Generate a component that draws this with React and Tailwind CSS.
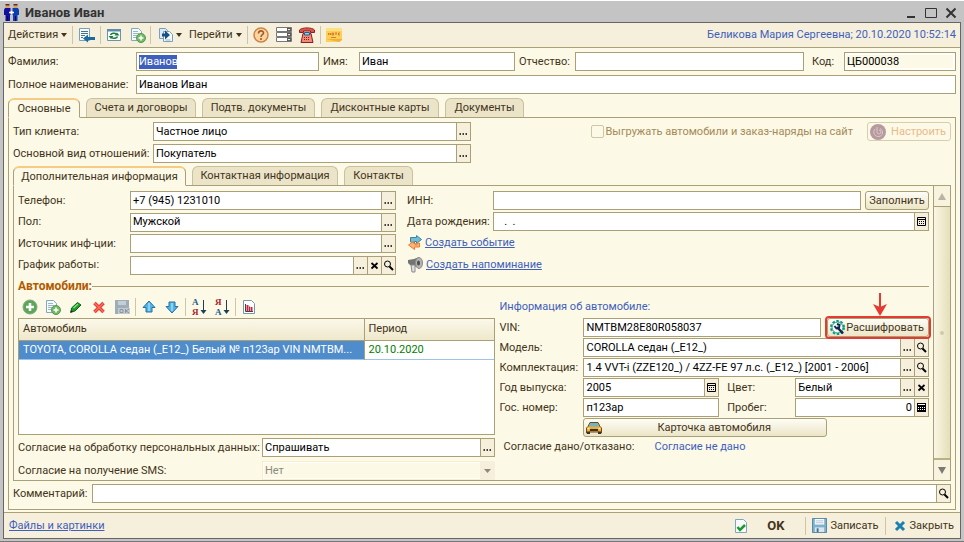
import clsx from 'clsx'

const mainTabs = [
    { title: 'Основные', width: 'w-[72px]' },
    { title: 'Счета и договоры', width: 'w-[110px]' },
    { title: 'Подтв. документы', width: 'w-[113px]' },
    { title: 'Дисконтные карты', width: 'w-[118px]' },
    { title: 'Документы', width: 'w-[79px]' },
]

const infoTabs = [
    { title: 'Дополнительная информация', width: 'w-[173px]' },
    { title: 'Контактная информация', width: 'w-[146px]' },
    { title: 'Контакты', width: 'w-[69px]' },
]

const cars = [
    { name: 'TOYOTA, COROLLA седан (_E12_) Белый № п123ар VIN NMTBM...', period: '20.10.2020' },
]

export default function App() {

    return (

        <div className="flex min-h-screen w-full flex-col border-t border-b border-t-white border-b-[#777] bg-[#c4c4c4] px-[3px] pb-0.5 font-['Roboto','Liberation_Sans',sans-serif] text-[11px] leading-4 whitespace-nowrap text-[#43341a]">

            <TitleBar />

            <div className="flex flex-1 flex-col border border-[#666] bg-[#fcf9e6]">

                <Toolbar />

                <main className="flex flex-1 flex-col px-1 pt-1">

                    {/* NAME FIELDS */}

                    <div className="grid grid-cols-[128px_183fr_40px_156fr_60px_229fr_40px_112fr] items-center">
                        <label htmlFor="surname">Фамилия:</label>
                        <div className="flex h-[19px] items-center border border-[#a9a077] bg-white pl-0.5">
                            <input
                                id="surname"
                                defaultValue="Иванов"
                                className="h-3.5 w-[38px] bg-[#3f5fbd] text-white outline-none"
                            />
                        </div>
                        <label htmlFor="name" className="pl-1">Имя:</label>
                        <Field id="name" value="Иван" />
                        <label htmlFor="patronymic" className="pl-1">Отчество:</label>
                        <Field id="patronymic" />
                        <label htmlFor="code" className="pl-2">Код:</label>
                        <Field id="code" value="ЦБ000038" muted />
                    </div>

                    <div className="mt-1 flex items-center">
                        <label htmlFor="fullname" className="w-32 shrink-0">Полное наименование:</label>
                        <Field id="fullname" value="Иванов Иван" />
                    </div>

                    {/* MAIN TABS */}

                    <Tabs items={mainTabs} className="mt-1" />

                    <section className="border border-[#a9a077] px-1 pt-1 pb-1.5">

                        <div className="flex items-start justify-between">

                            <div className="grid w-1/2 max-w-[458px] grid-cols-[140px_1fr] items-center gap-y-[3px]">
                                <label htmlFor="type">Тип клиента:</label>
                                <Field id="type" value="Частное лицо" actions={['dots']} />
                                <label htmlFor="relation">Основной вид отношений:</label>
                                <Field id="relation" value="Покупатель" actions={['dots']} />
                            </div>

                            <div className="flex items-center">
                                <label className="flex items-center gap-0.5 text-[#a58a58]">
                                    <input
                                        type="checkbox"
                                        disabled
                                        className="size-[13px] appearance-none rounded-xs border border-[#cfc7a4]"
                                    />
                                    Выгружать автомобили и заказ-наряды на сайт
                                </label>
                                <button
                                    disabled
                                    className="ml-3.5 flex h-[19px] w-[84px] items-center justify-between rounded-[3px] border border-[#d6cfae] pr-1 pl-0.5 text-[#eab98c]"
                                >
                                    <SpiralIcon />
                                    Настроить
                                </button>
                            </div>

                        </div>

                        {/* INFO TABS */}

                        <Tabs items={infoTabs} className="mt-[3px]" />

                        <div className="flex border border-[#a9a077]">

                            <div className="min-w-0 flex-1 pt-[5px] pr-1 pl-1">

                                <PersonalInfo />

                                <div className="mt-[3px] flex items-center text-xs leading-4 font-bold text-[#b25a00]">
                                    <h2>Автомобили:</h2>
                                    <hr className="flex-1 border-[#a9a077]" />
                                </div>

                                <div className="mt-[3px] grid grid-cols-[478fr_430fr] gap-x-1">
                                    <CarList />
                                    <CarInfo />
                                </div>

                            </div>

                            <ScrollBar />

                        </div>

                        <div className="mt-[3px] flex items-center">
                            <label htmlFor="comment" className="w-[79px] shrink-0">Комментарий:</label>
                            <Field id="comment" actions={['search']} />
                        </div>

                    </section>

                </main>

                <Footer />

            </div>

        </div>

    )
}


function TitleBar() {

    return (

        <header className="flex h-[21px] items-center pt-0.5 pr-1 pl-px text-[#333]">
            <PeopleIcon />
            <h1 className="ml-1.5 flex-1 text-[13px] font-bold">Иванов Иван</h1>
            <button aria-label="Свернуть" className="mr-2">
                <svg width="12" height="12" viewBox="0 0 12 12"><path d="M2 10h8" stroke="#333" strokeWidth="2" /></svg>
            </button>
            <button aria-label="Развернуть" className="mr-2">
                <svg width="12" height="12" viewBox="0 0 12 12"><path d="M.5 1.5h11v9H.5z" fill="none" stroke="#333" /></svg>
            </button>
            <button aria-label="Закрыть окно">
                <svg width="12" height="12" viewBox="0 0 12 12"><path d="M1.500 1.500l9 9m0-9l-9 9" stroke="#333" strokeWidth="2" /></svg>
            </button>
        </header>

    )
}


function Toolbar() {

    return (

        <nav className="flex h-[25px] shrink-0 items-center border-b border-[#a9a077] bg-[#f5efdb] px-1">
            <button className="flex w-[59px] items-center justify-between">Действия <Caret /></button>
            <Divider className="mx-[5px]" />
            <button aria-label="Записать и закрыть"><ListArrowIcon /></button>
            <Divider className="mx-[5px]" />
            <button aria-label="Перечитать"><RefreshIcon /></button>
            <button aria-label="Скопировать" className="ml-2"><DocPlusIcon /></button>
            <Divider className="mr-[7px] ml-1" />
            <button aria-label="Ввести на основании" className="flex items-center gap-0.5"><DocsIcon /><Caret /></button>
            <button className="ml-[7px] flex w-[53px] items-center justify-between">Перейти <Caret /></button>
            <Divider className="mx-[5px]" />
            <button aria-label="Справка"><HelpIcon /></button>
            <button aria-label="Настройки" className="ml-[7px]"><ServerIcon /></button>
            <button aria-label="Позвонить" className="ml-[7px]"><PhoneIcon /></button>
            <Divider className="mx-[5px]" />
            <button aria-label="Заметка"><NoteIcon /></button>
            <span className="ml-auto text-[#3f5fbd]">Беликова Мария Сергеевна; 20.10.2020 10:52:14</span>
        </nav>

    )
}


function PersonalInfo() {

    return (

        <div className="grid grid-cols-[378fr_522fr] gap-x-[11px]">

            <div className="grid grid-cols-[112px_1fr] items-center gap-y-0.5">
                <label htmlFor="phone">Телефон:</label>
                <Field id="phone" value="+7 (945) 1231010" actions={['dots']} />
                <label htmlFor="sex">Пол:</label>
                <Field id="sex" value="Мужской" actions={['dots']} />
                <label htmlFor="source">Источник инф-ции:</label>
                <Field id="source" actions={['dots']} />
                <label htmlFor="schedule">График работы:</label>
                <Field id="schedule" actions={['dots', 'clear', 'search']} />
            </div>

            <div className="flex flex-col gap-0.5">
                <div className="flex items-center">
                    <label htmlFor="inn" className="w-[86px] shrink-0">ИНН:</label>
                    <Field id="inn" />
                    <Button className="ml-1 w-16 shrink-0 justify-center">Заполнить</Button>
                </div>
                <div className="flex items-center">
                    <label htmlFor="birthday" className="w-[86px] shrink-0">Дата рождения:</label>
                    <Field id="birthday" value="   .  ." actions={['calendar']} />
                </div>
                <div className="flex h-5 items-center gap-0.5">
                    <EventIcon />
                    <a href="#event" className="text-[#3f5fbd] underline">Создать событие</a>
                </div>
                <div className="flex h-5 items-center gap-0.5">
                    <HornIcon />
                    <a href="#reminder" className="text-[#3f5fbd] underline">Создать напоминание</a>
                </div>
            </div>

        </div>

    )
}


function CarList() {

    return (

        <div className="min-w-0">

            <div className="flex h-5 items-center pl-1">
                <button aria-label="Добавить"><PlusIcon /></button>
                <button aria-label="Добавить копированием" className="ml-[7px]"><DocPlusIcon /></button>
                <button aria-label="Изменить" className="ml-[7px]"><PencilIcon /></button>
                <button aria-label="Удалить" className="ml-[7px]"><DeleteIcon /></button>
                <button aria-label="Сохранить" className="ml-[7px]" disabled><SaveOkIcon /></button>
                <Divider className="mx-[5px]" />
                <button aria-label="Вверх"><ArrowIcon /></button>
                <button aria-label="Вниз" className="ml-[7px]"><ArrowIcon className="rotate-180" /></button>
                <Divider className="mx-[5px]" />
                <button aria-label="По возрастанию"><SortIcon top="А" bottom="Я" /></button>
                <button aria-label="По убыванию" className="ml-[7px]"><SortIcon top="Я" bottom="А" flip /></button>
                <Divider className="mx-[5px]" />
                <button aria-label="Отчет"><ChartIcon /></button>
            </div>

            <div className="mt-px h-[117px] border border-[#a9a077] bg-white">
                <table className="w-full table-fixed text-left">
                    <thead>
                        <tr className="h-[21px] bg-linear-to-b from-[#fbf8ea] to-[#efe8cb]">
                            <th className="w-[345px] border-r border-b border-[#a9a077] px-1 font-normal">Автомобиль</th>
                            <th className="border-b border-[#a9a077] px-1 font-normal">Период</th>
                        </tr>
                    </thead>
                    <tbody>
                        {cars.map(car => (
                            <tr key={car.name} className="h-[19px] border-b border-[#9fc3e6]">
                                <td className="truncate border-r border-[#a9a077] bg-[#4f8ccb] px-1 text-white">{car.name}</td>
                                <td className="px-1 text-[#008000]">{car.period}</td>
                            </tr>
                        ))}
                    </tbody>
                </table>
            </div>

            <div className="mt-[3px] flex items-center">
                <label htmlFor="consent" className="w-[244px] shrink-0">Согласие на обработку персональных данных:</label>
                <Field id="consent" value="Спрашивать" actions={['dots']} />
            </div>

            <div className="mt-1 flex items-center">
                <label htmlFor="sms" className="w-[244px] shrink-0">Согласие на получение SMS:</label>
                <div className="relative flex-1">
                    <select
                        id="sms"
                        disabled
                        className="block h-[19px] w-full appearance-none border border-[#f9eecb] bg-[#fcf9e6] px-0.5 text-[#8a8a80] opacity-100 inset-ring-1 inset-ring-white"
                    >
                        <option>Нет</option>
                    </select>
                    <span className="pointer-events-none absolute inset-y-0 right-0 flex w-[15px] items-center justify-center bg-[#f5efdb]">
                        <svg width="7" height="4" viewBox="0 0 7 4"><path d="M0 0h7L3.500 4z" fill="#8a8a80" /></svg>
                    </span>
                </div>
            </div>

        </div>

    )
}


function CarInfo() {

    return (

        <div>

            <h3 className="flex h-5 items-center text-[#3f5fbd]">Информация об автомобиле:</h3>

            <div className="mt-px grid grid-cols-[84px_1fr] items-center gap-y-px">

                <label htmlFor="vin">VIN:</label>
                <div className="flex items-center">
                    <Field id="vin" value="NMTBM28E80R058037" />
                    <div className="relative ml-1.5 w-[102px] shrink-0">
                        <Button className="w-full justify-between pr-1 pl-0.5">
                            <GearIcon />
                            Расшифровать
                        </Button>
                        <span className="pointer-events-none absolute -inset-x-0.5 -inset-y-0.5 rounded-sm border-2 border-[#e53a30]" />
                        <svg className="pointer-events-none absolute right-[42px] bottom-full mb-0.5" width="14" height="23" viewBox="0 0 14 23">
                            <path d="M7 0v16" stroke="#e53a30" strokeWidth="2" />
                            <path d="M0 11l7 3 7-3-7 12z" fill="#e53a30" />
                        </svg>
                    </div>
                </div>

                <label htmlFor="model">Модель:</label>
                <Field id="model" value="COROLLA седан (_E12_)" actions={['dots', 'search']} />

                <label htmlFor="kit">Комплектация:</label>
                <Field id="kit" value="1.4 VVT-i (ZZE120_) / 4ZZ-FE 97 л.с. (_E12_) [2001 - 2006]" actions={['dots', 'search']} />

                <label htmlFor="year">Год выпуска:</label>
                <div className="grid grid-cols-[136fr_76px_134fr] items-center">
                    <Field id="year" value="2005" actions={['calendar']} />
                    <label htmlFor="color" className="pl-2">Цвет:</label>
                    <Field id="color" value="Белый" actions={['dots', 'clear']} />
                </div>

                <label htmlFor="plate">Гос. номер:</label>
                <div className="grid grid-cols-[136fr_76px_134fr] items-center">
                    <Field id="plate" value="п123ар" />
                    <label htmlFor="mileage" className="pl-2">Пробег:</label>
                    <Field id="mileage" value="0" actions={['calc']} align="right" />
                </div>

                <Button className="col-start-2 mr-[102px] pl-0.5">
                    <CarIcon />
                    <span className="flex-1 text-center">Карточка автомобиля</span>
                </Button>

            </div>

            <p className="flex h-5 items-center pl-1">
                <span className="w-[151px]">Согласие дано/отказано:</span>
                <span className="text-[#3f5fbd]">Согласие не дано</span>
            </p>

        </div>

    )
}


function ScrollBar() {

    return (

        <div className="flex w-[17px] shrink-0 flex-col border-l border-[#a9a077] bg-linear-to-r from-[#faf6e4] to-[#e6dfba]">
            <button aria-label="Прокрутить вверх" className="flex h-[21px] items-center justify-center border-b border-[#a9a077] bg-[#f8f3df]">
                <svg width="8" height="7" viewBox="0 0 8 7"><path d="M0 7h8L4 0z" fill="#b8b4a2" /></svg>
            </button>
            <div className="flex flex-1 items-center justify-center">
                <span className="size-1 rounded-full bg-[#cfc9ae]" />
            </div>
            <button aria-label="Прокрутить вниз" className="flex h-[22px] items-center justify-center border-t-2 border-[#b9b084] bg-[#f8f3df]">
                <svg width="8" height="7" viewBox="0 0 8 7"><path d="M0 0h8L4 7z" fill="#7d7a70" /></svg>
            </button>
        </div>

    )
}


function Footer() {

    return (

        <footer className="mt-0.5 flex h-[26px] shrink-0 items-center border-t border-[#a9a077] bg-[#f5efdb] pr-1.5 pl-[5px]">
            <a href="#files" className="text-[#3f5fbd] underline">Файлы и картинки</a>
            <button className="ml-auto flex items-center gap-[18px] text-[13px] font-bold"><CheckDocIcon /> OK</button>
            <Divider className="mr-1.5 ml-[21px]" />
            <button className="flex items-center gap-[3px]"><DiskIcon /> Записать</button>
            <Divider className="mr-[7px] ml-1.5" />
            <button className="flex items-center gap-[3px]"><CloseIcon /> Закрыть</button>
        </footer>

    )
}


function Tabs({ items, className }) {

    return (

        <div className={clsx('flex gap-1.5', className)} role="tablist">
            {items.map((item, index) => (
                <button
                    key={item.title}
                    role="tab"
                    aria-selected={index === 0}
                    className={clsx(
                        'rounded-t-md border',
                        item.width,
                        index === 0
                            ? 'relative -mb-px h-5 border-t-2 border-[#a9a077] border-t-[#f6cb86] border-b-[#fcf9e6] bg-[#fcf9e6]'
                            : 'h-[19px] border-b-0 border-[#c9c19b] bg-[#ebe4c8]'
                    )}
                >
                    {item.title}
                </button>
            ))}
        </div>

    )
}


function Field({ id, value = '', actions = [], muted, align }) {

    return (

        <div className="flex h-[19px] min-w-0 flex-1 border border-[#a9a077] bg-white text-black">
            <input
                id={id}
                defaultValue={value}
                className={clsx(
                    'min-w-0 flex-1 outline-none',
                    muted ? 'm-0.5 bg-[#fcf9e6]' : 'px-0.5',
                    align === 'right' && 'text-right'
                )}
            />
            {actions.map(action => (
                <button
                    key={action}
                    aria-label={action}
                    className="flex w-3.5 shrink-0 items-center justify-center border-l border-[#a9a077] bg-[#f5efdb]"
                >
                    <ActionIcon name={action} />
                </button>
            ))}
        </div>

    )
}


function Button({ className, children }) {

    return (

        <button
            className={clsx(
                'flex h-[19px] items-center rounded-[3px] border border-[#a9a077] bg-linear-to-b from-[#fefdf6] to-[#ece5c6]',
                className
            )}
        >
            {children}
        </button>

    )
}


function Divider({ className }) {

    return <span className={clsx('h-[18px] w-px shrink-0 bg-[#cdc6a6]', className)} />
}


function Caret() {

    return <svg className="shrink-0" width="6" height="4" viewBox="0 0 6 4"><path d="M0 0h6L3 4z" fill="#43341a" /></svg>
}


/* ICONS */

function ActionIcon({ name }) {

    return (

        <svg className="shrink-0" width="11" height="11" viewBox="0 0 11 11" fill="none" stroke="#000">
            {name === 'dots' && <path d="M1.500 8h1.500M4.500 8H6M7.500 8H9" strokeWidth="1.500" />}
            {name === 'clear' && <path d="M2.500 3l6 5.500m0-5.500l-6 5.500" strokeWidth="1.700" />}
            {name === 'search' && (
                <>
                    <circle cx="4.500" cy="4" r="3" />
                    <path d="M6.500 6.500l3.500 3.500" strokeWidth="2" />
                </>
            )}
            {name === 'calendar' && (
                <>
                    <path d="M1.500 1.500h8v8h-8zM1.500 3.500h8" />
                    <path d="M3 5.500h6M3 7.500h6" strokeDasharray="1 1" />
                </>
            )}
            {name === 'calc' && (
                <>
                    <path d="M1 1h9v9H1z" fill="#000" stroke="none" />
                    <path d="M2 2.500h7" stroke="#fff" />
                    <path d="M2 5.500h7M2 7.500h7" stroke="#fff" strokeDasharray="1 1" />
                </>
            )}
        </svg>

    )
}

function PeopleIcon() {

    return (

        <svg width="15" height="17" viewBox="0 0 15 17">
            <path d="M1.500 1h4v3h-4zM9.500 1h4v3h-4z" fill="#d9a06a" />
            <path d="M1.500 0h4v1.500h-4zM9.500 0h4v1.500h-4z" fill="#5a2f1c" />
            <path d="M1 4h5.500v7H6v6H1.500v-6H0V6z" fill="#10109c" />
            <path d="M8.500 4H14l1 2v5h-1.500v6H9v-6h-.5z" fill="#0c3fae" />
            <path d="M3.500 12v5M11.500 12v5" stroke="#050560" />
            <path d="M5 8.500h5M7.500 7v3" stroke="#fff" strokeWidth="1.500" />
        </svg>

    )
}

function ListArrowIcon() {

    return (

        <svg width="17" height="16" viewBox="0 0 17 16">
            <path d="M1.500 1.500h10v12h-10z" fill="#f4f9fc" stroke="#7aa0b8" />
            <path d="M3 4.500h7M3 6.500h7M3 8.500h4M3 10.500h2" stroke="#4c6f86" />
            <path d="M5 11.500l5-4v2.500h7v3h-7v2.500z" fill="#1d6a9c" />
        </svg>

    )
}

function RefreshIcon() {

    return (

        <svg width="16" height="16" viewBox="0 0 16 16">
            <path d="M1.500 2.500h13v11h-13z" fill="#fff" stroke="#6d93ab" />
            <path d="M1 2h14v2.500H1z" fill="#5f8cab" />
            <path d="M4.500 8a3.500 2.500 0 0 1 6-1M11.500 9.500a3.500 2.500 0 0 1-6 1" fill="none" stroke="#16803c" strokeWidth="1.500" />
            <path d="M8.500 8.500h5L11 5.500zM7.500 9h-5L5 12z" fill="#16803c" />
        </svg>

    )
}

function DocPlusIcon() {

    return (

        <svg width="16" height="16" viewBox="0 0 16 16">
            <path d="M1.500 1.500h7l3 3v9h-10z" fill="#f5fafc" stroke="#82a8bd" />
            <path d="M3 4.500h5M3 6.500h6M3 8.500h4M3 10.500h3" stroke="#9db4c1" />
            <circle cx="11" cy="11" r="4.500" fill="#6fba63" stroke="#5a9457" />
            <path d="M11 8.500v5M8.500 11h5" stroke="#fff" strokeWidth="1.500" />
        </svg>

    )
}

function DocsIcon() {

    return (

        <svg width="16" height="16" viewBox="0 0 16 16">
            <path d="M1.500 1.500h6l2 2v8h-8z" fill="#dcebf5" stroke="#7aa0b8" />
            <path d="M5.500 4.500h6l3 3v7h-9z" fill="#f5fafc" stroke="#7aa0b8" />
            <path d="M4 6.500h3V3.500l5 4.500-5 4.500v-3H4z" fill="#1a4f86" />
            <path d="M7.500 13h5" stroke="#9db4c1" />
        </svg>

    )
}

function HelpIcon() {

    return (

        <svg width="16" height="16" viewBox="0 0 16 16">
            <circle cx="8" cy="8" r="7" fill="#fbd5a0" stroke="#d08444" strokeWidth="1.500" />
            <path d="M5.500 6.500c0-3.500 5-3.300 5-.5C10.500 7.800 8 7.600 8 10M8 11v2" fill="none" stroke="#a05a28" strokeWidth="1.600" />
        </svg>

    )
}

function ServerIcon() {

    return (

        <svg width="16" height="16" viewBox="0 0 16 16">
            {[0, 5, 10].map(y => (
                <g key={y}>
                    <path d={`M.5 ${y + 0.5}h15v4H.5z`} fill="#fff" stroke="#777" />
                    <path d={`M11 ${y + 1}h4v3h-4z`} fill="#555" />
                    <path d={`M11.500 ${y + 2}h3l-1.500 1.500z`} fill="#fff" />
                </g>
            ))}
        </svg>

    )
}

function PhoneIcon() {

    return (

        <svg width="16" height="16" viewBox="0 0 16 16">
            <path d="M4 6.500h8l2 9H2z" fill="#f08a72" stroke="#8b1f1f" />
            <path d="M.5 5.500V3C3 .2 13 .2 15.500 3v2.500h-4V4h-7v1.500z" fill="#dd5548" stroke="#8b1f1f" />
            <path d="M5.500 5.500h5v2.500h-5z" fill="#8ed0ee" stroke="#2b5e86" />
            <path d="M5 10.500h6M5 12.500h6" stroke="#8b1f1f" strokeDasharray="1 1" />
        </svg>

    )
}

function NoteIcon() {

    return (

        <svg width="16" height="16" viewBox="0 0 16 16">
            <path d="M0 1h16v12l-3 2H0z" fill="#fbd055" />
            <path d="M0 1h16v3H0z" fill="#fde084" />
            <path d="M0 12l13 3 3-2v-1z" fill="#f0b13c" />
            <path d="M2.500 8V6l2 2V6M6 6h1.500v2H6zM9 6h2M10 6v2M14 6h-1.500v2H14M5 10.500h5" fill="none" stroke="#cf6a2a" strokeWidth=".8" />
        </svg>

    )
}

function SpiralIcon() {

    return (

        <svg width="16" height="16" viewBox="0 0 16 16" fill="none">
            <circle cx="8" cy="8" r="8" fill="#b79aa0" />
            <path d="M7 3v5.500a2 2 0 1 0 2-2.500M5 5c-3 4 0 8 4 7.500s5-6 1-8" stroke="#dcc9c8" />
        </svg>

    )
}

function EventIcon() {

    return (

        <svg width="16" height="16" viewBox="0 0 16 16">
            <path d="M3.500 7V2.500h6V.5l5 4-5 4V6.500h-2V8z" fill="#6fc0cf" stroke="#3f7fb0" />
            <path d="M12.500 8v4h-5v2.500l-6-4.500 5-3.500V8.500h2V10h1.500V8z" fill="#fbb47a" stroke="#ee7f2a" />
        </svg>

    )
}

function HornIcon() {

    return (

        <svg width="17" height="16" viewBox="0 0 17 16">
            <path d="M1 3l6-1 5-2v11l-5-2-4-1-2-2z" fill="#747474" />
            <path d="M4 8h4v7H5z" fill="#e0e0e0" stroke="#8a8a8a" />
            <ellipse cx="12" cy="6" rx="3.500" ry="5.500" fill="#b4b4b4" stroke="#8c8c8c" />
            <ellipse cx="11.500" cy="6" rx="1.500" ry="2.500" fill="#4d4d4d" />
        </svg>

    )
}

function PlusIcon() {

    return (

        <svg width="16" height="16" viewBox="0 0 16 16">
            <circle cx="8" cy="8" r="7" fill="#5aa856" stroke="#86a683" />
            <path d="M8 4v8M4 8h8" stroke="#fff" strokeWidth="2.500" />
        </svg>

    )
}

function PencilIcon() {

    return (

        <svg width="16" height="16" viewBox="0 0 16 16">
            <path d="M3 13l.5-4L9.500 3.500 13 6l-6 6z" fill="#1d9a2b" stroke="#0d6418" />
            <path d="M5.500 9l4.500-4" stroke="#7fe07c" strokeWidth="1.500" />
            <path d="M2 14l1-3 2 2z" fill="#222" />
        </svg>

    )
}

function DeleteIcon() {

    return (

        <svg width="16" height="16" viewBox="0 0 16 16">
            <path d="M3.500 4l9 9m0-9l-9 9" stroke="#e03a30" strokeWidth="3.500" />
            <path d="M3.500 4l9 9m0-9l-9 9" stroke="#fb6d5c" strokeWidth="1.500" />
        </svg>

    )
}

function SaveOkIcon() {

    return (

        <svg width="16" height="16" viewBox="0 0 16 16">
            <path d="M1 1h14v14H1z" fill="#9fadb8" />
            <path d="M4 2h8v4H4z" fill="#c5ced5" />
            <path d="M4 9h12v6H4z" fill="#c3cbd1" />
            <path d="M6 10.500h3v3H6zM11.500 10v4M15 10l-3 2 3 2" fill="none" stroke="#8896a1" />
        </svg>

    )
}

function ArrowIcon({ className }) {

    return (

        <svg className={className} width="16" height="16" viewBox="0 0 16 16">
            <path d="M8 2l6 6.500h-3V13H5V8.500H2z" fill="#4fb4e8" stroke="#2c6f9e" />
            <path d="M8 4v8" stroke="#8ad2f5" strokeWidth="2" />
        </svg>

    )
}

function SortIcon({ top, bottom, flip }) {

    return (

        <svg width="16" height="18" viewBox="0 0 16 18" fontFamily="Liberation Serif, serif" fontSize="9" fontWeight="700">
            <text x="1" y="7" fill={flip ? '#a81e2c' : '#1b5e83'}>{top}</text>
            <text x="1" y="17" fill={flip ? '#1b5e83' : '#a81e2c'}>{bottom}</text>
            <path d="M12.500 2v13" stroke="#1b4052" />
            <path d="M9.500 12h6l-3 4z" fill="#1b4052" />
        </svg>

    )
}

function ChartIcon() {

    return (

        <svg width="16" height="16" viewBox="0 0 16 16">
            <path d="M2.500 1.500h8l3 3v10h-11z" fill="#fff" stroke="#7597ab" />
            <path d="M4.500 5v7.500H12" fill="none" stroke="#444" />
            <path d="M6.500 6v6M10.500 8v4" stroke="#d3243c" strokeWidth="2" />
            <path d="M8.500 7.500V12" stroke="#843a5c" />
        </svg>

    )
}

function GearIcon() {

    return (

        <svg width="16" height="16" viewBox="0 0 16 16" fill="none">
            <circle cx="7.500" cy="7.500" r="6.500" stroke="#0e9a86" strokeWidth="2" strokeDasharray="2.500 1.600" />
            <circle cx="7.500" cy="7.500" r="5.500" stroke="#0e9a86" fill="#f4faf4" />
            <path d="M7 7l6 6.500" stroke="#14264f" strokeWidth="2.500" />
            <path d="M4.500 6l2 2.500L9 8l.5-3L7 4" stroke="#14264f" strokeWidth="2" />
        </svg>

    )
}

function CarIcon() {

    return (

        <svg className="shrink-0" width="16" height="12" viewBox="0 0 16 12">
            <path d="M4 .5h8l2 4 1.500 1.500v5h-3V10h-9v1H.5V6L2 4.500z" fill="#f0a93a" stroke="#6b4a1e" />
            <path d="M4.500 1h7l1.500 3.500H3z" fill="#68b6c8" />
            <path d="M4 7h8v2H4zM1 9.500h3V12H1zM12 9.500h3V12h-3z" fill="#3a3226" />
            <path d="M1.500 6.500h2M12.500 6.500h2" stroke="#fff2a8" strokeWidth="1.500" />
        </svg>

    )
}

function CheckDocIcon() {

    return (

        <svg width="16" height="16" viewBox="0 0 16 16">
            <path d="M2.500 1.500h8l3 3v10h-11z" fill="#f7fbfd" stroke="#7fa6bb" />
            <path d="M4.500 9l2.500 3 5-5" fill="none" stroke="#1c9a2c" strokeWidth="2.500" />
        </svg>

    )
}

function DiskIcon() {

    return (

        <svg width="15" height="15" viewBox="0 0 16 16">
            <path d="M.5.5h15v15H.5z" fill="#7fb0cd" stroke="#4f83a5" />
            <path d="M3 1h10v6H3z" fill="#f5f9fb" />
            <path d="M4 3h8M4 5h8" stroke="#b6c8d3" />
            <path d="M3 10h10v5H3z" fill="#dbe6ec" />
            <path d="M5 11h2v4H5z" fill="#3e7093" />
        </svg>

    )
}

function CloseIcon() {

    return (

        <svg width="14" height="14" viewBox="0 0 14 14">
            <path d="M3 3l8 8m0-8l-8 8" stroke="#1d7fb0" strokeWidth="3" />
        </svg>

    )
}
